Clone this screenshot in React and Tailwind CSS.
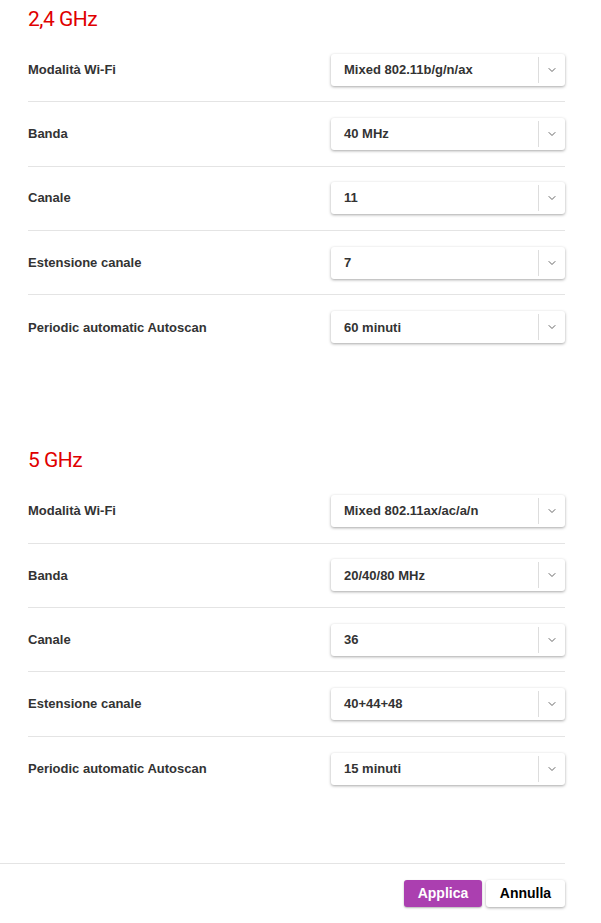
import { ChevronDown } from 'lucide-react';

const sections = [
  {
    title: '2,4 GHz',
    rows: [
      ['Modalità Wi-Fi', 'Mixed 802.11b/g/n/ax'],
      ['Banda', '40 MHz'],
      ['Canale', '11'],
      ['Estensione canale', '7'],
      ['Periodic automatic Autoscan', '60 minuti'],
    ],
  },
  {
    title: '5 GHz',
    rows: [
      ['Modalità Wi-Fi', 'Mixed 802.11ax/ac/a/n'],
      ['Banda', '20/40/80 MHz'],
      ['Canale', '36'],
      ['Estensione canale', '40+44+48'],
      ['Periodic automatic Autoscan', '15 minuti'],
    ],
  },
];

const Select = ({ value }) => (
  <div className="flex h-[32px] w-[234px] items-stretch rounded-[3px] bg-white shadow-[0_1px_3px_rgba(0,0,0,0.35)]">
    <span className="flex flex-1 items-center pl-[13px] text-[13px] font-bold text-[#333]">{value}</span>
    <span className="my-[3px] w-px bg-[#ddd]" />
    <span className="flex w-[26px] items-center justify-center text-[#666]">
      <ChevronDown className="h-[12px] w-[12px]" strokeWidth={2} />
    </span>
  </div>
);

const Section = ({ title, rows }) => (
  <div className="pl-[28px]">
    <h2 className="pt-[5px] pb-[5px] text-[21px] leading-[28px] tracking-[-0.5px] text-[#e00000] [font-family:Roboto,'Liberation_Sans',sans-serif]">
      {title}
    </h2>
    {rows.map(([label, value], i) => (
      <div
        key={label}
        className={`flex h-[64.3px] items-center justify-between ${i < rows.length - 1 ? 'border-b border-[#e4e4e4]' : ''}`}
      >
        <span className="text-[13px] font-bold text-[#333]">{label}</span>
        <Select value={value} />
      </div>
    ))}
  </div>
);

export default function App() {
  return (
    <div className="min-h-[923px] w-[601px] bg-white pr-[36px] [font-family:'Liberation_Sans',Arial,sans-serif]">
      <Section {...sections[0]} />
      <div className="h-[82px]" />
      <Section {...sections[1]} />
      <div className="mt-[62px] border-t border-[#e4e4e4] pt-[16px]">
        <div className="flex justify-end gap-[4px]">
          <button className="h-[27px] w-[78px] rounded-[3px] bg-[#ab3fb0] text-[14px] font-bold text-white shadow-[0_1px_2px_rgba(0,0,0,0.3)]">
            Applica
          </button>
          <button className="h-[27px] w-[79px] rounded-[3px] bg-white text-[14px] font-bold text-black shadow-[0_1px_3px_rgba(0,0,0,0.35)]">
            Annulla
          </button>
        </div>
      </div>
    </div>
  );
}
